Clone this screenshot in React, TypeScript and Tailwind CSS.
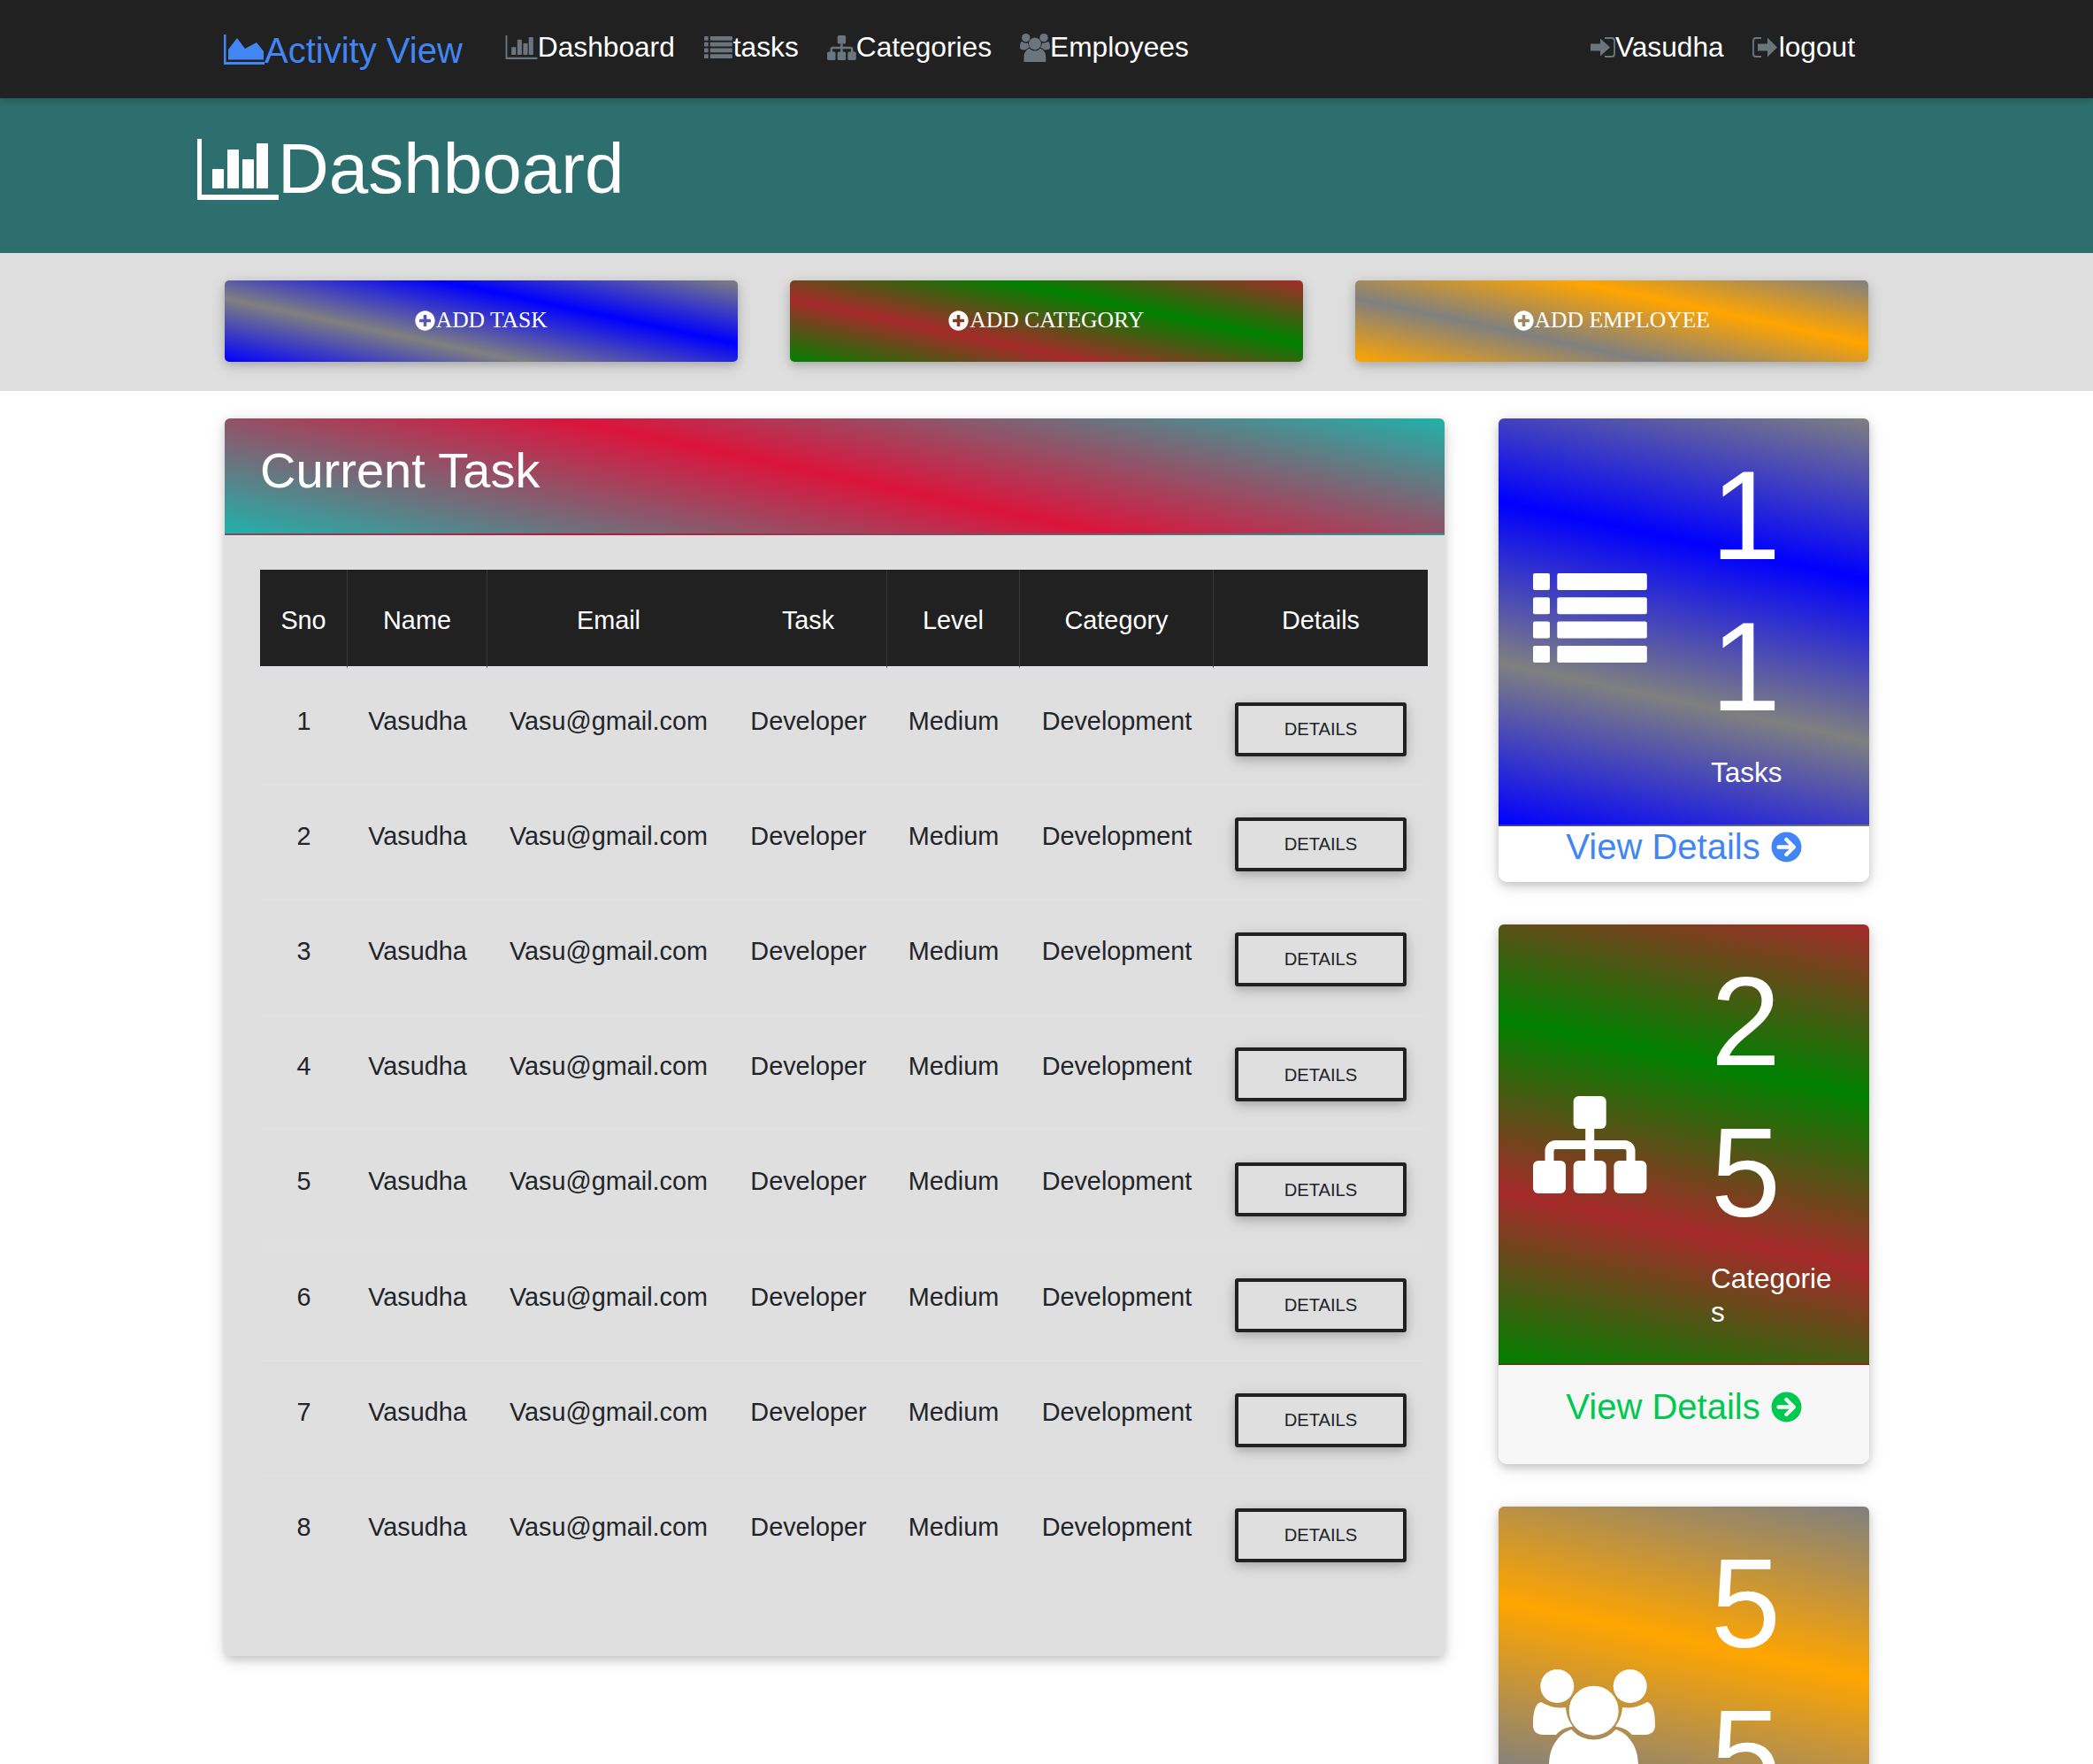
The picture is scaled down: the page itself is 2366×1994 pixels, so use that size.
import React from "react";
import { FaArrowCircleRight, FaPlusCircle } from "react-icons/fa";

const BarChartIcon = ({ className }: { className: string }) => (
  <svg viewBox="0 0 92 69" className={className} fill="currentColor">
    <path d="M0 0h5v63h87v6H0z" />
    <rect x="17" y="34" width="13" height="22" rx="1" />
    <rect x="34" y="12" width="13" height="44" rx="1" />
    <rect x="51" y="23" width="13" height="33" rx="1" />
    <rect x="67" y="5" width="13" height="51" rx="1" />
  </svg>
);

const AreaChartIcon = ({ className }: { className: string }) => (
  <svg viewBox="0 0 46 34" className={className} fill="currentColor">
    <path d="M0 0h2.5v31H46v3H0z" />
    <path d="M5 28.5V17L15 4l9 12 13-7 8 10v9.5z" />
  </svg>
);

const ListIcon = ({ className }: { className: string }) => (
  <svg viewBox="0 0 129 101" className={className} fill="currentColor">
    {[0, 27.3, 54.6, 82].map((y) => (
      <g key={y}>
        <rect x="0" y={y} width="19" height="19" rx="2" />
        <rect x="27.3" y={y} width="101.5" height="19" rx="2" />
      </g>
    ))}
  </svg>
);

const SitemapIcon = ({ className }: { className: string }) => (
  <svg viewBox="0 0 129 110" className={className} fill="currentColor">
    <rect x="45.7" y="0" width="37" height="37" rx="6" />
    <rect x="0" y="73" width="37" height="37" rx="6" />
    <rect x="45.7" y="73" width="37" height="37" rx="6" />
    <rect x="91.4" y="73" width="37" height="37" rx="6" />
    <path
      d="M18.5 75V62a7 7 0 0 1 7-7h78a7 7 0 0 1 7 7v13M64.2 36v39"
      fill="none"
      stroke="currentColor"
      strokeWidth="10"
    />
  </svg>
);

const UsersIcon = ({ className }: { className: string }) => (
  <svg viewBox="0 0 138 130" className={className} fill="currentColor">
    <circle cx="27.3" cy="19" r="19" />
    <circle cx="109.7" cy="19" r="19" />
    <circle cx="68.7" cy="46.7" r="28" />
    <path d="M9 37c10 5 16 7.500 28 6 .5 8 3 15 8 21.500-8 1-14 4-19 9.500H12C4 74 0 70 0 63c0-10 1-24 9-26z" />
    <path d="M129 37c-10 5-16 7.500-28 6-.5 8-3 15-8 21.500 8 1 14 4 19 9.500h14c8 0 12-4 12-11 0-10-1-24-9-26z" />
    <path d="M18 130v-20c0-15 4-24 9-30 4-6 10-10 16.500-12a33 33 0 0 0 50 0c6.500 2 12.500 6 16.500 12 5 6 9 15 9 30v20z" />
  </svg>
);

const SignInIcon = ({ className }: { className: string }) => (
  <svg viewBox="0 0 28 23" className={className} fill="currentColor">
    <path d="M0 7.500h11V1.500l11 10-11 10v-6H0z" />
    <path d="M16 1h8a3 3 0 0 1 3 3v15a3 3 0 0 1-3 3h-8" fill="none" stroke="currentColor" strokeWidth="1.800" />
  </svg>
);

const SignOutIcon = ({ className }: { className: string }) => (
  <svg viewBox="0 0 28 23" className={className} fill="currentColor">
    <path d="M10 1H4a3 3 0 0 0-3 3v15a3 3 0 0 0 3 3h6" fill="none" stroke="currentColor" strokeWidth="1.800" />
    <path d="M6 7.500h11V.500l11 11-11 11v-7H6z" />
  </svg>
);

const actions = [
  { label: "ADD TASK", bg: "bg-[linear-gradient(12deg,blue,gray,blue,gray)]" },
  { label: "ADD CATEGORY", bg: "bg-[linear-gradient(12deg,green,brown,green,brown)]" },
  { label: "ADD EMPLOYEE", bg: "bg-[linear-gradient(12deg,orange,gray,orange,gray)]" },
];

const columns = [
  { name: "Sno", width: "w-[99px]" },
  { name: "Name", width: "w-[158px]" },
  { name: "Email", width: "w-[274px]" },
  { name: "Task", width: "w-[178px]" },
  { name: "Level", width: "w-[150px]" },
  { name: "Category", width: "w-[219px]" },
  { name: "Details", width: "w-[242px]" },
];

const rows = [1, 2, 3, 4, 5, 6, 7, 8];

const StatCard = ({
  icon,
  count,
  label,
  bg,
  footer,
}: {
  icon: React.ReactNode;
  count: string;
  label: string;
  bg: string;
  footer: string;
}) => (
  <div className="w-[419px] rounded-t-[6px] rounded-b-[10px] shadow-[0_4px_10px_rgba(0,0,0,0.16),0_4px_20px_rgba(0,0,0,0.12)]">
    <div className={`flex items-center rounded-t-[6px] border-b-2 border-black/10 pt-[24px] pb-[23px] pl-[39px] ${bg}`}>
      <div className="w-[201px] text-white">{icon}</div>
      <div className="w-[146px] break-all text-white">
        <div className="mb-4 text-[142px] leading-[171px]">{count}</div>
        <div className="mb-4 text-[31.5px] leading-[37.8px]">{label}</div>
      </div>
    </div>
    <div className={footer}>
      <div className="flex items-center justify-center gap-3 text-[40px] leading-[47px]">
        <span>View Details</span>
        <FaArrowCircleRight className="h-[35px] w-[35px]" />
      </div>
    </div>
  </div>
);

export default function App() {
  return (
    <div className="h-[1994px] overflow-hidden bg-white font-['Liberation_Sans',Arial,sans-serif] text-[#212529]">
      <nav className="relative z-10 flex h-[111px] items-center justify-between bg-[#212121] pl-[253px] pr-[269px] shadow-[0_3px_8px_rgba(0,0,0,0.2)]">
        <div className="flex items-center">
          <a className="flex items-center text-[40px] text-[#4285f4]">
            <AreaChartIcon className="h-[34px] w-[46px]" />
            <span className="pt-[3px]">Activity View</span>
          </a>
          <div className="ml-[48px] flex items-center gap-[32px] pb-[3px] text-[31.7px] text-white">
            <a className="flex items-center">
              <BarChartIcon className="h-[27px] w-[37px] text-[#6c757d]" />
              <span>Dashboard</span>
            </a>
            <a className="flex items-center">
              <ListIcon className="h-[25px] w-[34px] text-[#6c757d]" />
              <span>tasks</span>
            </a>
            <a className="flex items-center">
              <SitemapIcon className="h-[28px] w-[33px] text-[#6c757d]" />
              <span>Categories</span>
            </a>
            <a className="flex items-center">
              <UsersIcon className="h-[32px] w-[34px] text-[#6c757d]" />
              <span>Employees</span>
            </a>
          </div>
        </div>
        <div className="flex items-center gap-[32px] pb-[3px] text-[31.7px] text-white">
          <a className="flex items-center">
            <SignInIcon className="h-[23px] w-[28px] text-[#6c757d]" />
            <span>Vasudha</span>
          </a>
          <a className="flex items-center gap-[2px]">
            <SignOutIcon className="h-[23px] w-[28px] text-[#6c757d]" />
            <span>logout</span>
          </a>
        </div>
      </nav>

      <header className="h-[175px] bg-[#2d6f6e] pl-[223px] pt-[32px] text-white">
        <h1 className="flex items-center text-[80px] leading-[96px]">
          <BarChartIcon className="h-[69px] w-[92px]" />
          <span className="-ml-[1px]">Dashboard</span>
        </h1>
      </header>

      <section className="flex h-[156px] gap-[59.500px] bg-[#dfdfdf] pl-[254px] pt-[31px]">
        {actions.map((a) => (
          <button
            key={a.label}
            className={`flex h-[92px] w-[579.500px] items-center justify-center rounded-[5px] pb-[2px] font-['Liberation_Serif',serif] text-[25.6px] text-white shadow-[0_4px_10px_rgba(0,0,0,0.16),0_4px_20px_rgba(0,0,0,0.12)] ${a.bg}`}
          >
            <FaPlusCircle className="mr-[1px] h-[23px] w-[23px]" />
            {a.label}
          </button>
        ))}
      </section>

      <main className="flex gap-[61px] pl-[254px] pt-[31px]">
        <div className="h-[1399px] w-[1379px] rounded-[6px] bg-[#dfdfdf] shadow-[0_4px_10px_rgba(0,0,0,0.16),0_4px_20px_rgba(0,0,0,0.12)]">
          <div className="h-[132px] rounded-t-[6px] border-b-2 border-black/10 bg-[linear-gradient(12deg,lightseagreen,crimson,lightseagreen)] pl-[40px] pt-[26px]">
            <h2 className="text-[56px] leading-[65px] text-white">Current Task</h2>
          </div>
          <div className="pl-[40px] pt-[39px]">
            <table className="w-[1320px] table-fixed border-separate border-spacing-0 text-center text-[28.8px] leading-[42.6px]">
              <thead>
                <tr>
                  {columns.map((c, i) => (
                    <th
                      key={c.name}
                      className={`h-[110px] border-b-[3px] border-b-[#dee2e6] bg-[#212121] pb-[30px] pt-[36px] align-top font-normal text-white ${c.width} ${
                        i < 6 && i !== 2 ? "border-r border-r-[#32383e]" : ""
                      }`}
                    >
                      {c.name}
                    </th>
                  ))}
                </tr>
              </thead>
              <tbody>
                {rows.map((n) => (
                  <tr key={n} className="h-[130.2px]">
                    {[String(n), "Vasudha", "Vasu@gmail.com", "Developer", "Medium", "Development"].map((text, i) => (
                      <td key={i} className="border-t-2 border-t-[#dee2e6] pt-[36px] align-top">
                        {text}
                      </td>
                    ))}
                    <td className="border-t-2 border-t-[#dee2e6] pt-[36px] align-top">
                      <button className="h-[61px] w-[194px] rounded-[3px] border-4 border-[#212121] text-[20.2px] leading-none shadow-[0_4px_10px_rgba(0,0,0,0.16),0_4px_20px_rgba(0,0,0,0.12)]">
                        DETAILS
                      </button>
                    </td>
                  </tr>
                ))}
              </tbody>
            </table>
          </div>
        </div>

        <aside className="flex w-[419px] flex-col gap-[48px]">
          <StatCard
            icon={<ListIcon className="-mt-[8px] h-[101px] w-[129px]" />}
            count="11"
            label="Tasks"
            bg="bg-[linear-gradient(12deg,blue,gray,blue,gray)]"
            footer="h-[63px] rounded-b-[10px] bg-white text-[#4285f4]"
          />
          <StatCard
            icon={<SitemapIcon className="h-[110px] w-[129px]" />}
            count="25"
            label="Categories"
            bg="bg-[linear-gradient(12deg,green,brown,green,brown)]"
            footer="h-[112px] rounded-b-[10px] bg-[#f7f7f7] pt-[24px] text-[#00c851]"
          />
          <StatCard
            icon={<UsersIcon className="h-[130px] w-[138px]" />}
            count="55"
            label="Employees"
            bg="bg-[linear-gradient(12deg,orange,gray,orange,gray)]"
            footer="h-[112px] rounded-b-[10px] bg-[#f7f7f7] pt-[24px] text-[#ffbb33]"
          />
        </aside>
      </main>
    </div>
  );
}
